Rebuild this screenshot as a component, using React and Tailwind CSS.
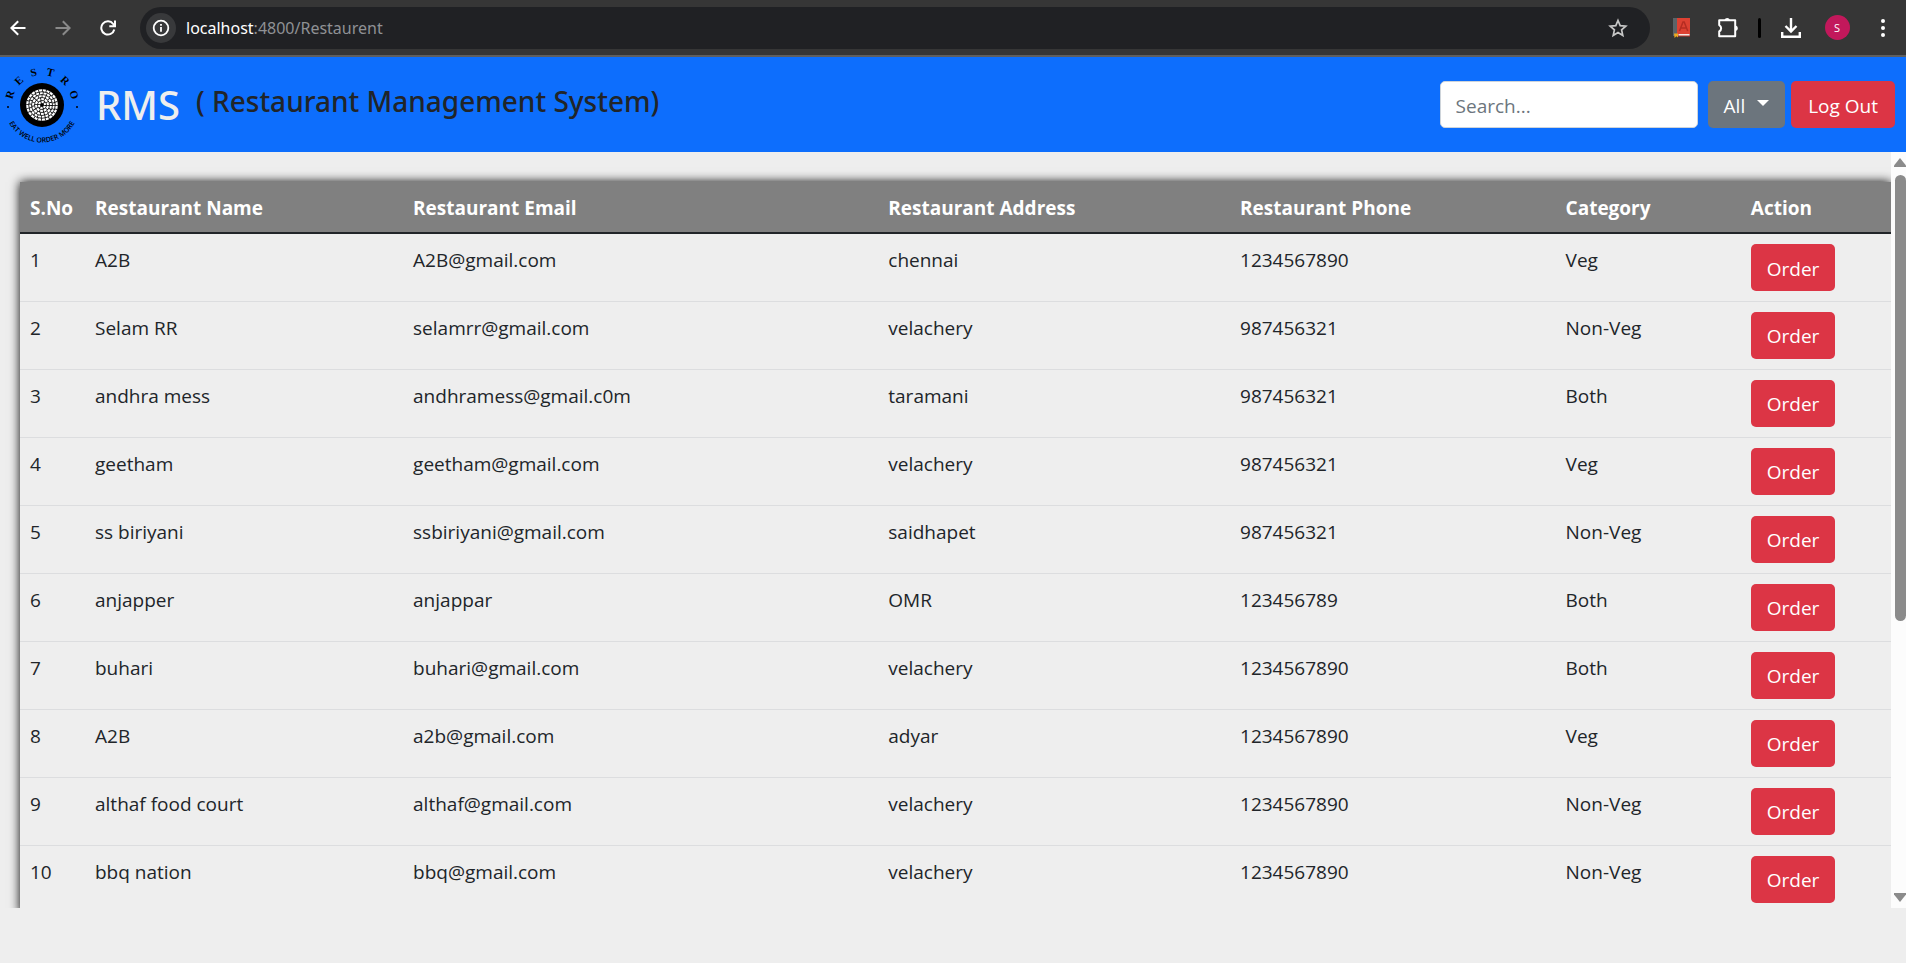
const restaurants = [
  ["A2B", "A2B@gmail.com", "chennai", "1234567890", "Veg"],
  ["Selam RR", "selamrr@gmail.com", "velachery", "987456321", "Non-Veg"],
  ["andhra mess", "andhramess@gmail.c0m", "taramani", "987456321", "Both"],
  ["geetham", "geetham@gmail.com", "velachery", "987456321", "Veg"],
  ["ss biriyani", "ssbiriyani@gmail.com", "saidhapet", "987456321", "Non-Veg"],
  ["anjapper", "anjappar", "OMR", "123456789", "Both"],
  ["buhari", "buhari@gmail.com", "velachery", "1234567890", "Both"],
  ["A2B", "a2b@gmail.com", "adyar", "1234567890", "Veg"],
  ["althaf food court", "althaf@gmail.com", "velachery", "1234567890", "Non-Veg"],
  ["bbq nation", "bbq@gmail.com", "velachery", "1234567890", "Non-Veg"],
];

const columns = [
  ["S.No", "w-[65px]"],
  ["Restaurant Name", "w-[17%]"],
  ["Restaurant Email", "w-[25.4%]"],
  ["Restaurant Address", "w-[18.8%]"],
  ["Restaurant Phone", "w-[17.4%]"],
  ["Category", "w-[9.9%]"],
  ["Action", ""],
];

function IconButton({ label, className = "", children }) {
  return (
    <button type="button" aria-label={label} className={`flex h-8 w-8 shrink-0 items-center justify-center ${className}`}>
      {children}
    </button>
  );
}

function BrowserBar() {
  return (
    <div className="flex h-[57px] shrink-0 items-center border-b-2 border-[#5f5f5f] bg-[#363636] pr-[7px] pl-0.5 text-white">
      <div className="flex gap-[13px]">
        <IconButton label="Back">
          <svg width="16" height="16" viewBox="0 0 16 16" fill="none" stroke="currentColor" strokeWidth="2">
            <path d="M15.5 8H2M8.2 1.2 1.4 8l6.800 6.800" />
          </svg>
        </IconButton>
        <IconButton label="Forward" className="text-[#8a8a8a]">
          <svg width="16" height="16" viewBox="0 0 16 16" fill="none" stroke="currentColor" strokeWidth="2">
            <path d="M.5 8H14M7.800 1.200 14.600 8l-6.800 6.800" />
          </svg>
        </IconButton>
        <IconButton label="Reload">
          <svg width="16" height="16" viewBox="0 0 16 16" fill="none" stroke="currentColor" strokeWidth="2">
            <path d="M14.300 9.500A6.600 6.600 0 1 1 13.200 4L14.800 6M15 .5v5.700H9.300" />
          </svg>
        </IconButton>
      </div>
      <div className="mr-4 ml-4 flex h-[42px] flex-1 items-center rounded-full bg-[#202124] pr-4 pl-1.5">
        <button type="button" aria-label="Site information" className="flex size-[30px] items-center justify-center rounded-full bg-[#38393b]">
          <svg width="18" height="18" viewBox="0 0 18 18" fill="none" stroke="currentColor" strokeWidth="1.800">
            <circle cx="9" cy="9" r="7.300" />
            <path d="M9 8v4.800M9 5v1.800" />
          </svg>
        </button>
        <a href="#" className="ml-2.5 flex-1 font-['Noto_Sans',sans-serif] text-base text-[#8f9195]">
          <span className="text-white">localhost</span>:4800/Restaurent
        </a>
        <IconButton label="Bookmark this page" className="text-[#c7c7c7]">
          <svg width="20" height="20" viewBox="0 0 20 20" fill="none" stroke="currentColor" strokeWidth="1.700">
            <path d="m10 2.500 2.200 5.200 5.600.5-4.200 3.700 1.200 5.500-4.800-2.900-4.800 2.900 1.200-5.500-4.200-3.700 5.600-.5z" />
          </svg>
        </IconButton>
      </div>
      <div className="flex items-center gap-3.5">
        <IconButton label="Dictionary extension">
          <svg width="18" height="21" viewBox="0 0 18 21">
            <path d="M0 1h4.500v18H0z" fill="#5c6468" />
            <path d="M4 1H17v16H4z" fill="#dd4132" />
            <path d="M4 17h13v2.500H4z" fill="#c0362a" />
            <path d="M5.500 17h11v1.500h-11z" fill="#f1e7e5" />
            <path d="m6.500 14 3.500-9h1.200l3.500 9M8 11h5.200" fill="none" stroke="#b52c22" strokeWidth="1.500" />
            <path d="M1 16.500h4v4l-1.700-1.200-1.700 1.600z" fill="#edaa20" />
          </svg>
        </IconButton>
        <IconButton label="Extensions">
          <svg width="22" height="22" viewBox="0 0 22 22" fill="none" stroke="currentColor" strokeWidth="2">
            <path
              d="M2.200 3.300h16v16h-16v-4.800a3.600 3.600 0 0 0 0-6.400z"
              strokeLinejoin="round"
            />
            <path d="M7.500 3a2.800 2.800 0 0 1 5.400 0zM18.800 8.600a2.800 2.800 0 0 1 0 5.400z" fill="currentColor" stroke="none" />
          </svg>
        </IconButton>
        <span className="h-5 w-[3px] rounded-sm bg-black" />
        <IconButton label="Downloads">
          <svg width="22" height="22" viewBox="0 0 22 22" fill="none" stroke="currentColor" strokeWidth="2.400">
            <path d="M11 1v13M5.500 9l5.500 5.500L16.500 9M2.200 15v4.800h17.600V15" />
          </svg>
        </IconButton>
        <IconButton label="Profile">
          <span className="flex size-[25px] items-center justify-center rounded-full bg-[#c2185b] text-[11px] leading-none">S</span>
        </IconButton>
        <IconButton label="Menu">
          <svg width="6" height="20" viewBox="0 0 6 20" fill="currentColor">
            <circle cx="3" cy="3" r="2" />
            <circle cx="3" cy="10" r="2" />
            <circle cx="3" cy="17" r="2" />
          </svg>
        </IconButton>
      </div>
    </div>
  );
}

function Logo() {
  return (
    <svg width="84" height="84" viewBox="0 0 84 84" role="img" aria-label="Restro, eat well order more">
      <defs>
        <path id="arc-bottom" d="M4.500 42a37.500 37.500 0 0 0 75 0" />
      </defs>
      <circle cx="42" cy="42" r="22" />
      <circle cx="42" cy="42" r="15.800" fill="#fff" />
      <g fill="none" stroke="#000" strokeWidth=".8">
        <circle cx="42" cy="42" r="4.500" />
        <circle cx="42" cy="42" r="7.500" />
        <circle cx="42" cy="42" r="10.500" />
        <circle cx="42" cy="42" r="13.300" />
        <circle cx="42" cy="42" r="3" strokeDasharray=".8 2.300" strokeWidth="3" />
        <circle cx="42" cy="42" r="6" strokeDasharray=".8 2.900" strokeWidth="3" />
        <circle cx="42" cy="42" r="9" strokeDasharray=".8 3" strokeWidth="3" />
        <circle cx="42" cy="42" r="12" strokeDasharray=".8 3" strokeWidth="3" />
        <circle cx="42" cy="42" r="14.600" strokeDasharray=".8 3" strokeWidth="2.500" />
      </g>
      <circle cx="42" cy="42" r="2" />
      <circle cx="8" cy="44" r="1" />
      <circle cx="77" cy="44" r="1" />
      <g className="font-['Liberation_Serif',serif] text-[11px] font-bold" textAnchor="middle">
        {["R", "E", "S", "T", "R", "O"].map((letter, i) => (
          <text key={i} x="42" y="12" transform={`rotate(${-72 + i * 28.800} 42 42)`}>
            {letter}
          </text>
        ))}
      </g>
      <text className="font-['Open_Sans',sans-serif] text-[7px] font-semibold" textAnchor="middle">
        <textPath href="#arc-bottom" startOffset="50%">EAT WELL ORDER MORE</textPath>
      </text>
    </svg>
  );
}

function Header() {
  return (
    <header className="flex h-[95px] shrink-0 items-center bg-[#0d6efd] pr-[11px]">
      <Logo />
      <h1 className="ml-3 font-['Noto_Sans',sans-serif] text-[40px] font-medium text-[#eeeeee]">RMS</h1>
      <h2 className="mb-2 ml-4 font-['Noto_Sans',sans-serif] text-[28px] font-medium text-[#212529]">
        ( Restaurant Management System)
      </h2>
      <form className="ml-auto flex items-center">
        <input
          type="search"
          aria-label="Search"
          placeholder="Search..."
          className="h-[47px] w-[258px] rounded-[5px] border border-[#ced4da] bg-white px-[15px] pt-0.5 text-[#212529] placeholder:text-[#6c757d]"
        />
        <button type="button" className="ml-2.5 flex h-[47px] items-center gap-3 rounded-[5px] bg-[#6c757d] px-4 pt-0.5 text-white">
          All
          <svg width="12" height="6" viewBox="0 0 12 6" fill="currentColor" className="mb-1.5">
            <path d="M0 0h12L6 6z" />
          </svg>
        </button>
        <button type="button" className="ml-1.5 h-[47px] rounded-[5px] bg-[#dc3545] px-[17px] pt-0.5 text-white">
          Log Out
        </button>
      </form>
    </header>
  );
}

function ScrollTrack() {
  return (
    <div aria-hidden="true" className="flex w-[15px] shrink-0 flex-col items-end bg-[#fcfcfc] py-1.5">
      <svg width="12" height="9" viewBox="0 0 12 9" fill="#8b8b8b">
        <path d="M6 0 12 7.500V9H0V7.500z" />
      </svg>
      <div className="mt-2 h-[60%] w-[11px] rounded-full bg-[#8b8b8b]" />
      <svg width="12" height="9" viewBox="0 0 12 9" fill="#8b8b8b" className="mt-auto">
        <path d="M6 9 12 1.500V0H0v1.500z" />
      </svg>
    </div>
  );
}

export default function App() {
  return (
    <div className="flex h-screen flex-col bg-[#eeeeee] font-['Open_Sans','Noto_Sans',sans-serif] text-[19px] leading-[30px] text-[#212529]">
      <BrowserBar />
      <Header />
      <main className="mb-[55px] flex min-h-0 flex-1">
        <div className="min-w-0 flex-1 overflow-hidden pt-[30px] pl-5">
          <table className="w-full table-fixed border-collapse text-left shadow-[0_0_10px_#000]">
            <thead className="bg-[#808080] text-white">
              <tr className="h-[51px] border-b-2 border-[#212529]">
                {columns.map(([name, width]) => (
                  <th key={name} scope="col" className={`px-2.5 pt-0.5 font-bold whitespace-nowrap ${width}`}>
                    {name}
                  </th>
                ))}
              </tr>
            </thead>
            <tbody className="bg-[#eeeeee]">
              {restaurants.map((row, i) => (
                <tr key={i} className="h-[68px] border-b border-[#dcdddf] align-top">
                  <td className="px-2.5 pt-[11px]">{i + 1}</td>
                  {row.map((value, j) => (
                    <td key={j} className="px-2.5 pt-[11px]">
                      {value}
                    </td>
                  ))}
                  <td className="px-2.5 pt-2.5">
                    <button type="button" className="block h-[47px] rounded-[5px] bg-[#dc3545] px-4 pt-0.5 text-white">
                      Order
                    </button>
                  </td>
                </tr>
              ))}
            </tbody>
          </table>
        </div>
        <ScrollTrack />
      </main>
    </div>
  );
}
